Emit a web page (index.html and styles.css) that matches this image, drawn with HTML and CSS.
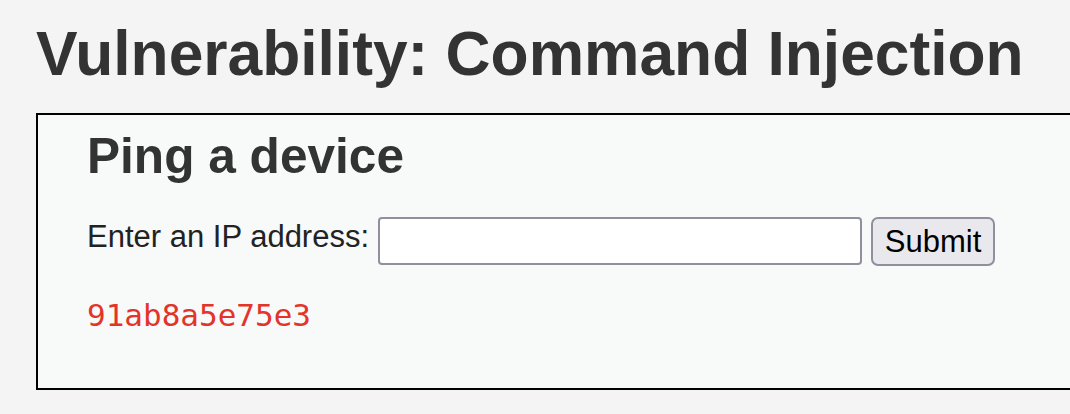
FILE: index.html
```html
<!DOCTYPE html>
<html lang="en">
<head>
<meta charset="utf-8">
<title>Vulnerability: Command Injection</title>
<link rel="stylesheet" href="styles.css">
</head>
<body>
<div class="page">
  <h1 class="title">Vulnerability: Command Injection</h1>
  <div class="vulnerable-code">
    <h2 class="subtitle">Ping a device</h2>
    <form class="ping-form" onsubmit="return false;">
      <label class="ping-label" for="ip">Enter an IP address:</label>
      <input class="ping-input" id="ip" type="text" name="ip">
      <button class="ping-submit" type="submit">Submit</button>
    </form>
    <pre class="output">91ab8a5e75e3</pre>
  </div>
</div>
</body>
</html>
```
FILE: styles.css
```css
html, body {
  margin: 0;
  padding: 0;
  overflow: hidden;
  background: #f4f4f4;
}

.page {
  padding-left: 36px;
  font-family: "Liberation Sans", Arial, sans-serif;
  color: #333333;
  overflow: hidden;
}

.title {
  margin: 18px 0 23px 0;
  font-size: 62.3px;
  line-height: 72px;
  font-weight: bold;
  white-space: nowrap;
}

.vulnerable-code {
  width: 1100px;
  border: 2px solid #000;
  background: #f8f9f9;
  padding: 11px 0 55px 49px;
}

.subtitle {
  margin: 0 0 31px 0;
  font-size: 49.6px;
  line-height: 60px;
  font-weight: bold;
}

.ping-form {
  display: flex;
  align-items: flex-start;
  margin: 0;
}

.ping-label {
  margin-top: 2px;
  font-size: 31px;
  line-height: 36px;
  color: #222;
  margin-right: 9px;
}

.ping-input {
  box-sizing: border-box;
  width: 484px;
  height: 48px;
  border: 2px solid #8f8f9d;
  border-radius: 4px;
  background: #fff;
  margin: 0 9px 0 0;
  padding: 2px 6px;
  font-size: 31px;
  font-family: "Liberation Sans", Arial, sans-serif;
}

.ping-submit {
  box-sizing: border-box;
  width: 124px;
  height: 49px;
  border: 2px solid #8f8f9d;
  border-radius: 7px;
  background: #e9e9ed;
  color: #000;
  margin: 0;
  padding: 0;
  font-size: 31px;
  font-family: "Liberation Sans", Arial, sans-serif;
}

.output {
  margin: 31px 0 0 0;
  font-family: "DejaVu Sans Mono", monospace;
  font-size: 31px;
  line-height: 36px;
  color: #e3342a;
}
```
